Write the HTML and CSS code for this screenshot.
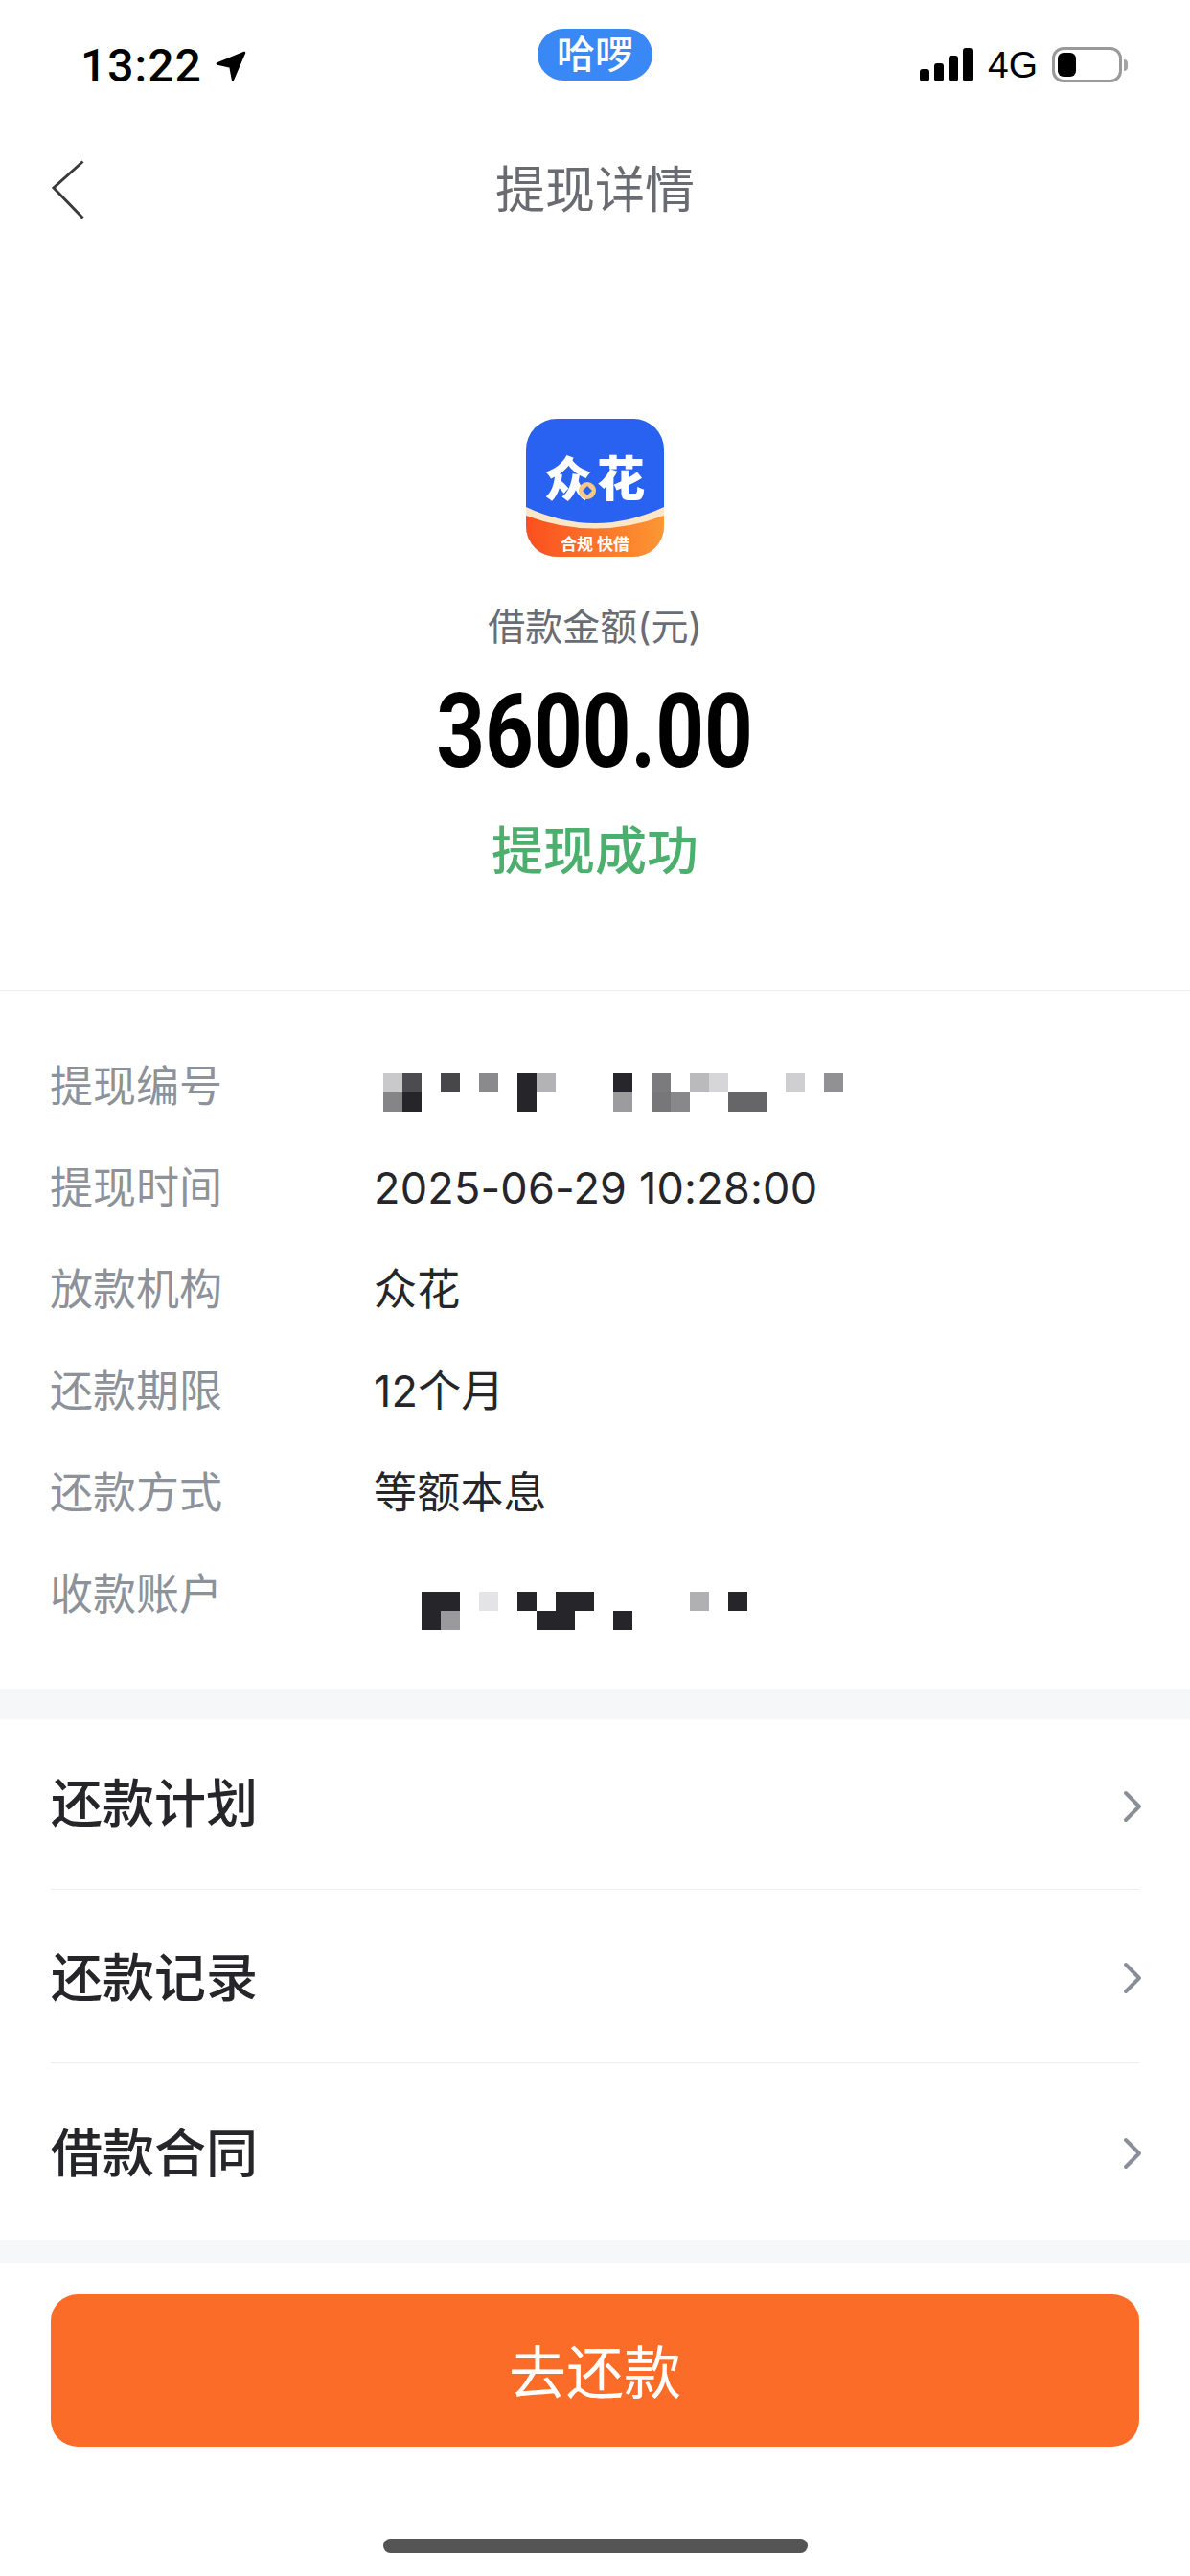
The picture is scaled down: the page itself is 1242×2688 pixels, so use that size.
FILE: index.html
```html
<!DOCTYPE html>
<html lang="zh-CN">
<head>
<meta charset="utf-8">
<title>提现详情</title>
<link rel="stylesheet" href="styles.css">
</head>
<body>
<div class="page">
  <div class="status-bar">
    <div class="status-left">
      <span class="time">13:22</span>
      <svg class="arrow" width="32" height="32" viewBox="0 0 32 32"><path d="M30 2 L2 13.500 L15.500 16.500 L18 30 Z" fill="#000" stroke="#000" stroke-width="2.500" stroke-linejoin="round"/></svg>
    </div>
    <div class="pill">哈啰</div>
    <div class="status-right">
      <div class="signal"><i class="bar1"></i><i class="bar2"></i><i class="bar3"></i><i class="bar4"></i></div>
      <span class="network">4G</span>
      <div class="battery"><div class="battery-level"></div></div>
      <div class="battery-tip"></div>
    </div>
  </div>

  <div class="nav">
    <svg class="back" width="34" height="62" viewBox="0 0 34 62"><path d="M32.500 1.500 L2 29 L32.500 60.500" fill="none" stroke="#3a3a3a" stroke-width="3"/></svg>
    <h1 class="nav-title">提现详情</h1>
  </div>

  <div class="hero">
    <svg class="logo" width="144" height="144" viewBox="0 0 144 144">
      <defs>
        <clipPath id="logo-clip"><rect width="144" height="144" rx="32"/></clipPath>
        <linearGradient id="logo-orange" x1="0" x2="1" y1="0" y2="0">
          <stop offset="0" stop-color="#fb4f1e"/>
          <stop offset="1" stop-color="#fb9733"/>
        </linearGradient>
      </defs>
      <g clip-path="url(#logo-clip)">
        <rect width="144" height="144" fill="#2962f0"/>
        <path d="M0 92 Q72 126 144 92 V144 H0 Z" fill="#fbe6c8"/>
        <path d="M0 101 Q72 128 144 101 V144 H0 Z" fill="url(#logo-orange)"/>
      </g>
      <text class="logo-name" x="19" y="81">众</text>
      <text class="logo-name" x="74" y="81">花</text>
      <circle cx="64" cy="75" r="9" fill="#f6c987"/>
      <rect x="60.500" y="71.500" width="7" height="7" fill="#2962f0" transform="rotate(45 64 75)"/>
      <text class="logo-slogan" x="72" y="137" text-anchor="middle">合规 快借</text>
    </svg>
    <div class="amount-label">借款金额(元)</div>
    <div class="amount">3600.00</div>
    <div class="state">提现成功</div>
  </div>

  <div class="info">
    <div class="info-row">
      <span class="info-label">提现编号</span>
      <svg class="mosaic" width="480" height="40" viewBox="0 0 480 40">
        <rect x="0" y="0" width="20" height="20" fill="#c9c9cb"/>
        <rect x="20" y="0" width="20" height="20" fill="#4c4c50"/>
        <rect x="60" y="0" width="20" height="20" fill="#47474a"/>
        <rect x="100" y="0" width="20" height="20" fill="#8a8a8c"/>
        <rect x="140" y="0" width="20" height="20" fill="#26262a"/>
        <rect x="160" y="0" width="20" height="20" fill="#b3b3b5"/>
        <rect x="240" y="0" width="20" height="20" fill="#27272b"/>
        <rect x="280" y="0" width="20" height="20" fill="#7b7b7e"/>
        <rect x="320" y="0" width="20" height="20" fill="#bababc"/>
        <rect x="340" y="0" width="20" height="20" fill="#d6d6d8"/>
        <rect x="420" y="0" width="20" height="20" fill="#cfcfd1"/>
        <rect x="460" y="0" width="20" height="20" fill="#919193"/>
        <rect x="0" y="20" width="20" height="20" fill="#858587"/>
        <rect x="20" y="20" width="20" height="20" fill="#26262a"/>
        <rect x="140" y="20" width="20" height="20" fill="#26262a"/>
        <rect x="240" y="20" width="20" height="20" fill="#9c9c9e"/>
        <rect x="280" y="20" width="20" height="20" fill="#77777a"/>
        <rect x="300" y="20" width="20" height="20" fill="#88888a"/>
        <rect x="360" y="20" width="40" height="20" fill="#666668"/>
      </svg>
    </div>
    <div class="info-row">
      <span class="info-label">提现时间</span>
      <span class="info-value">2025-06-29 10:28:00</span>
    </div>
    <div class="info-row">
      <span class="info-label">放款机构</span>
      <span class="info-value">众花</span>
    </div>
    <div class="info-row">
      <span class="info-label">还款期限</span>
      <span class="info-value">12个月</span>
    </div>
    <div class="info-row">
      <span class="info-label">还款方式</span>
      <span class="info-value">等额本息</span>
    </div>
    <div class="info-row">
      <span class="info-label">收款账户</span>
      <svg class="mosaic mosaic-low" width="480" height="40" viewBox="0 0 480 40">
        <rect x="40" y="0" width="40" height="20" fill="#26262a"/>
        <rect x="100" y="0" width="20" height="20" fill="#e4e4e6"/>
        <rect x="140" y="0" width="20" height="20" fill="#26262a"/>
        <rect x="180" y="0" width="40" height="20" fill="#26262a"/>
        <rect x="320" y="0" width="20" height="20" fill="#b0b0b2"/>
        <rect x="360" y="0" width="20" height="20" fill="#26262a"/>
        <rect x="40" y="20" width="20" height="20" fill="#26262a"/>
        <rect x="60" y="20" width="20" height="20" fill="#9a9a9c"/>
        <rect x="160" y="20" width="40" height="20" fill="#26262a"/>
        <rect x="240" y="20" width="20" height="20" fill="#26262a"/>
      </svg>
    </div>
  </div>

  <div class="band"></div>

  <div class="menu">
    <div class="menu-row">
      <span>还款计划</span>
      <svg class="chevron" width="20" height="34" viewBox="0 0 20 34"><path d="M3 3 L17 17 L3 31" fill="none" stroke="#8a8e98" stroke-width="4" stroke-linecap="round" stroke-linejoin="round"/></svg>
    </div>
    <div class="menu-row">
      <span>还款记录</span>
      <svg class="chevron" width="20" height="34" viewBox="0 0 20 34"><path d="M3 3 L17 17 L3 31" fill="none" stroke="#8a8e98" stroke-width="4" stroke-linecap="round" stroke-linejoin="round"/></svg>
    </div>
    <div class="menu-row">
      <span>借款合同</span>
      <svg class="chevron" width="20" height="34" viewBox="0 0 20 34"><path d="M3 3 L17 17 L3 31" fill="none" stroke="#8a8e98" stroke-width="4" stroke-linecap="round" stroke-linejoin="round"/></svg>
    </div>
  </div>

  <div class="band band-low"></div>

  <div class="footer">
    <button class="repay">去还款</button>
    <div class="home-bar"></div>
  </div>
</div>
</body>
</html>
```

FILE: styles.css
```css
html, body {
  margin: 0;
  padding: 0;
  background: #fff;
}

body {
  font-family: "Inter", "Noto Sans CJK SC", sans-serif;
}

.page {
  width: 1242px;
  height: 2688px;
  display: flex;
  flex-direction: column;
  overflow: hidden;
}

/* status bar */
.status-bar {
  height: 116px;
  box-sizing: border-box;
  padding: 30px 65px 0;
  display: grid;
  grid-template-columns: 1fr auto 1fr;
  align-items: start;
}

.status-left {
  display: flex;
  align-items: center;
  gap: 14px;
  margin: 15px 0 0 19px;
}

.time {
  font: 500 48px/48px Roboto, sans-serif;
  color: #000;
  letter-spacing: 1px;
}

.pill {
  width: 120px;
  height: 54px;
  border-radius: 27px;
  background: #3a88f5;
  color: #fff;
  font-size: 40px;
  font-weight: 500;
  line-height: 54px;
  text-align: center;
}

.status-right {
  display: flex;
  align-items: center;
  justify-content: flex-end;
  margin-top: 19px;
}

.signal {
  display: flex;
  align-items: flex-end;
  gap: 5px;
  height: 35px;
  margin-right: 16px;
}

.signal i {
  display: block;
  width: 10px;
  background: #000;
  border-radius: 3px;
}

.bar1 { height: 13px; }
.bar2 { height: 19px; }
.bar3 { height: 27px; }
.bar4 { height: 35px; }

.network {
  font: 400 39px/36px "Liberation Sans", sans-serif;
  color: #000;
  margin-right: 15px;
}

.battery {
  width: 73px;
  height: 37px;
  box-sizing: border-box;
  border: 3px solid #999;
  border-radius: 12px;
  padding: 3px;
}

.battery-level {
  width: 19px;
  height: 100%;
  background: #000;
  border-radius: 6px;
}

.battery-tip {
  width: 4px;
  height: 12px;
  margin-left: 2px;
  background: #a5a5a5;
  border-radius: 0 5px 5px 0;
}

/* nav */
.nav {
  height: 164px;
  box-sizing: border-box;
  padding-left: 54px;
  position: relative;
  display: flex;
  align-items: center;
}

.nav-title {
  position: absolute;
  left: 0;
  right: 0;
  top: 49px;
  margin: 0;
  text-align: center;
  font-size: 52px;
  line-height: 68px;
  font-weight: 400;
  color: #6a6a72;
}

/* top part */
.hero {
  height: 754px;
  box-sizing: border-box;
  padding-top: 157px;
  display: flex;
  flex-direction: column;
  align-items: center;
  border-bottom: 1px solid #eeeef0;
}

.logo {
  display: block;
}

.logo-name {
  font-family: "Noto Sans CJK SC", sans-serif;
  font-size: 50px;
  font-weight: 900;
  fill: #fff;
}

.logo-slogan {
  font-family: "Noto Sans CJK SC", sans-serif;
  font-size: 17px;
  font-weight: 700;
  fill: #fff;
}

.amount-label {
  margin-top: 47px;
  font-size: 39px;
  line-height: 52px;
  color: #686c74;
}

.amount {
  margin-top: 23px;
  font-family: Roboto, sans-serif;
  font-size: 108px;
  line-height: 120px;
  font-weight: 700;
  color: #000;
  transform: scaleX(0.82);
}

.state {
  margin-top: 30px;
  font-size: 54px;
  line-height: 72px;
  font-weight: 500;
  color: #4caf6e;
}

/* details */
.info {
  padding: 47px 0 45px 52px;
}

.info-row {
  height: 106px;
  display: flex;
  align-items: flex-start;
  font-size: 45px;
  line-height: 106px;
}

.info-label {
  width: 338px;
  color: #8d929a;
}

.info-value {
  color: #26262a;
  letter-spacing: 0.2px;
}

.mosaic {
  display: block;
  margin: 39px 0 0 10px;
}

.mosaic-low {
  margin-top: 50px;
}

.band {
  height: 32px;
  background: #f6f7f9;
}

.band-low {
  height: 24px;
}

/* links */
.menu {
  padding: 0 53px;
}

.menu-row {
  height: 181px;
  box-sizing: border-box;
  padding-bottom: 4px;
  display: flex;
  justify-content: space-between;
  align-items: center;
  font-size: 54px;
  font-weight: 500;
  color: #26262a;
  border-bottom: 1px solid #eeeef0;
}

.menu-row:first-child {
  height: 178px;
}

.menu-row:first-child span {
  margin-bottom: 5px;
}

.menu-row:last-child {
  height: 184px;
  border-bottom: 0;
}

.chevron {
  display: block;
  margin: 8px -3px 0 0;
}

/* bottom */
.footer {
  flex: 1;
  padding: 33px 53px 0;
  display: flex;
  flex-direction: column;
  align-items: center;
}

.repay {
  width: 100%;
  height: 159px;
  padding: 0 0 5px;
  border: 0;
  border-radius: 28px;
  background: #fb6c28;
  color: #fff;
  font-family: inherit;
  font-size: 60px;
}

.home-bar {
  width: 443px;
  height: 15px;
  margin-top: 96px;
  border-radius: 8px;
  background: #555;
}
```
